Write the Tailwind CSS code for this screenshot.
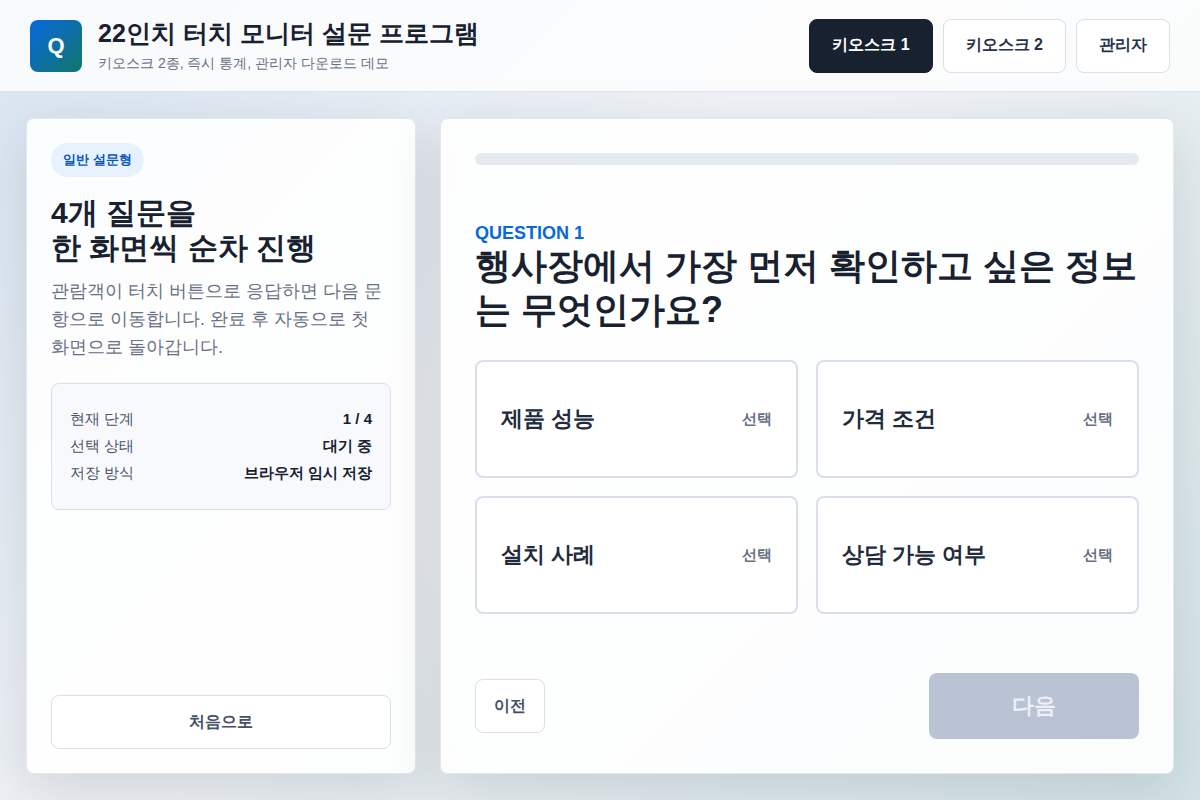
<!DOCTYPE html>
<html lang="ko">
<head>
<meta charset="utf-8">
<meta name="viewport" content="width=device-width, initial-scale=1">
<title>22인치 터치 모니터 설문 프로그램</title>
<script src="https://cdn.jsdelivr.net/npm/@tailwindcss/browser@4"></script>
</head>
<body class="flex min-h-screen flex-col bg-[#eff2f6] bg-[linear-gradient(135deg,rgba(10,110,200,0.10),transparent_42%,transparent_48%,rgba(20,130,120,0.12))] font-['Liberation_Sans',sans-serif] leading-[normal] text-[#172130]">
  <header class="flex items-center justify-between gap-6 border-b border-[#e2e6ec] bg-white/80 px-[30px] py-[18px]">
    <div class="flex items-center gap-4">
      <div class="flex size-[52px] items-center justify-center rounded-lg bg-linear-135/srgb from-[#0868df] to-[#12766a] text-[22px] font-bold text-white">Q</div>
      <div class="flex flex-col gap-[5px]">
        <h1 class="text-[25px] leading-[30px] font-bold">22인치 터치 모니터 설문 프로그램</h1>
        <p class="text-sm leading-5 text-[#687086]">키오스크 2종, 즉시 통계, 관리자 다운로드 데모</p>
      </div>
    </div>
    <nav class="flex gap-2.5">
      <button class="h-[54px] rounded-lg border border-[#172130] bg-[#172130] px-[22px] font-bold text-white">키오스크 1</button>
      <button class="h-[54px] rounded-lg border border-[#d9dfeb] bg-white px-[22px] font-bold text-[#26324a]">키오스크 2</button>
      <button class="h-[54px] rounded-lg border border-[#d9dfeb] bg-white px-[22px] font-bold text-[#26324a]">관리자</button>
    </nav>
  </header>

  <main class="grid flex-1 grid-cols-[390px_1fr] gap-6 p-[26px]">
    <aside class="flex flex-col rounded-lg border border-[#dfe3ea]/80 bg-white/90 p-6 shadow-[0_18px_55px_rgba(23,32,51,0.14)]">
      <span class="flex h-[34px] items-center self-start rounded-full bg-[#e8f2ff] px-3 text-[13px] font-bold text-[#0757bd]">일반 설문형</span>
      <h2 class="mt-[18px] text-[30px] leading-[35px] font-bold">4개 질문을<br>한 화면씩 순차 진행</h2>
      <p class="mt-3 text-lg leading-7 text-[#687086]">관람객이 터치 버튼으로 응답하면 다음 문항으로 이동합니다. 완료 후 자동으로 첫 화면으로 돌아갑니다.</p>
      <dl class="mt-[22px] rounded-lg border border-[#d9dfeb] bg-[#f8f9fd] px-[18px] pt-[21px] pb-[23px] text-[15px] leading-[27px] text-[#4a5368]">
        <div class="flex justify-between"><dt>현재 단계</dt><dd class="font-bold text-[#172130]">1 / 4</dd></div>
        <div class="flex justify-between"><dt>선택 상태</dt><dd class="font-bold text-[#172130]">대기 중</dd></div>
        <div class="flex justify-between"><dt>저장 방식</dt><dd class="font-bold text-[#172130]">브라우저 임시 저장</dd></div>
      </dl>
      <button class="mt-auto h-[54px] rounded-lg border border-[#d9dfeb] bg-white font-bold text-[#465066]">처음으로</button>
    </aside>

    <section class="flex flex-col rounded-lg border border-[#dfe3ea]/80 bg-white/90 p-[34px] shadow-[0_18px_55px_rgba(23,32,51,0.14)]">
      <div class="h-3 rounded-md bg-[#e4e9f2]" role="progressbar" aria-label="진행률" aria-valuemin="0" aria-valuemax="4" aria-valuenow="0"></div>
      <div class="flex flex-1 flex-col justify-center pb-0.5">
        <p class="text-lg leading-[22px] font-bold text-[#0868df]">QUESTION 1</p>
        <h2 class="text-4xl leading-[44px] font-bold">행사장에서 가장 먼저 확인하고 싶은 정보는 무엇인가요?</h2>
        <div class="mt-7 grid grid-cols-2 gap-[18px]">
          <button class="flex h-[118px] items-center justify-between rounded-lg border-2 border-[#d9dfeb] bg-white px-6 text-[22px] font-bold text-[#202b3c]">제품 성능<span class="text-[15px] text-[#687086]">선택</span></button>
          <button class="flex h-[118px] items-center justify-between rounded-lg border-2 border-[#d9dfeb] bg-white px-6 text-[22px] font-bold text-[#202b3c]">가격 조건<span class="text-[15px] text-[#687086]">선택</span></button>
          <button class="flex h-[118px] items-center justify-between rounded-lg border-2 border-[#d9dfeb] bg-white px-6 text-[22px] font-bold text-[#202b3c]">설치 사례<span class="text-[15px] text-[#687086]">선택</span></button>
          <button class="flex h-[118px] items-center justify-between rounded-lg border-2 border-[#d9dfeb] bg-white px-6 text-[22px] font-bold text-[#202b3c]">상담 가능 여부<span class="text-[15px] text-[#687086]">선택</span></button>
        </div>
      </div>
      <div class="flex items-center justify-between">
        <button class="h-[54px] rounded-lg border border-[#d9dfeb] bg-white px-[18px] font-bold text-[#465066]">이전</button>
        <button disabled class="h-[66px] w-[210px] rounded-lg bg-[#bac3d3] text-[22px] font-bold text-[#edf0f6]">다음</button>
      </div>
    </section>
  </main>
</body>
</html>
